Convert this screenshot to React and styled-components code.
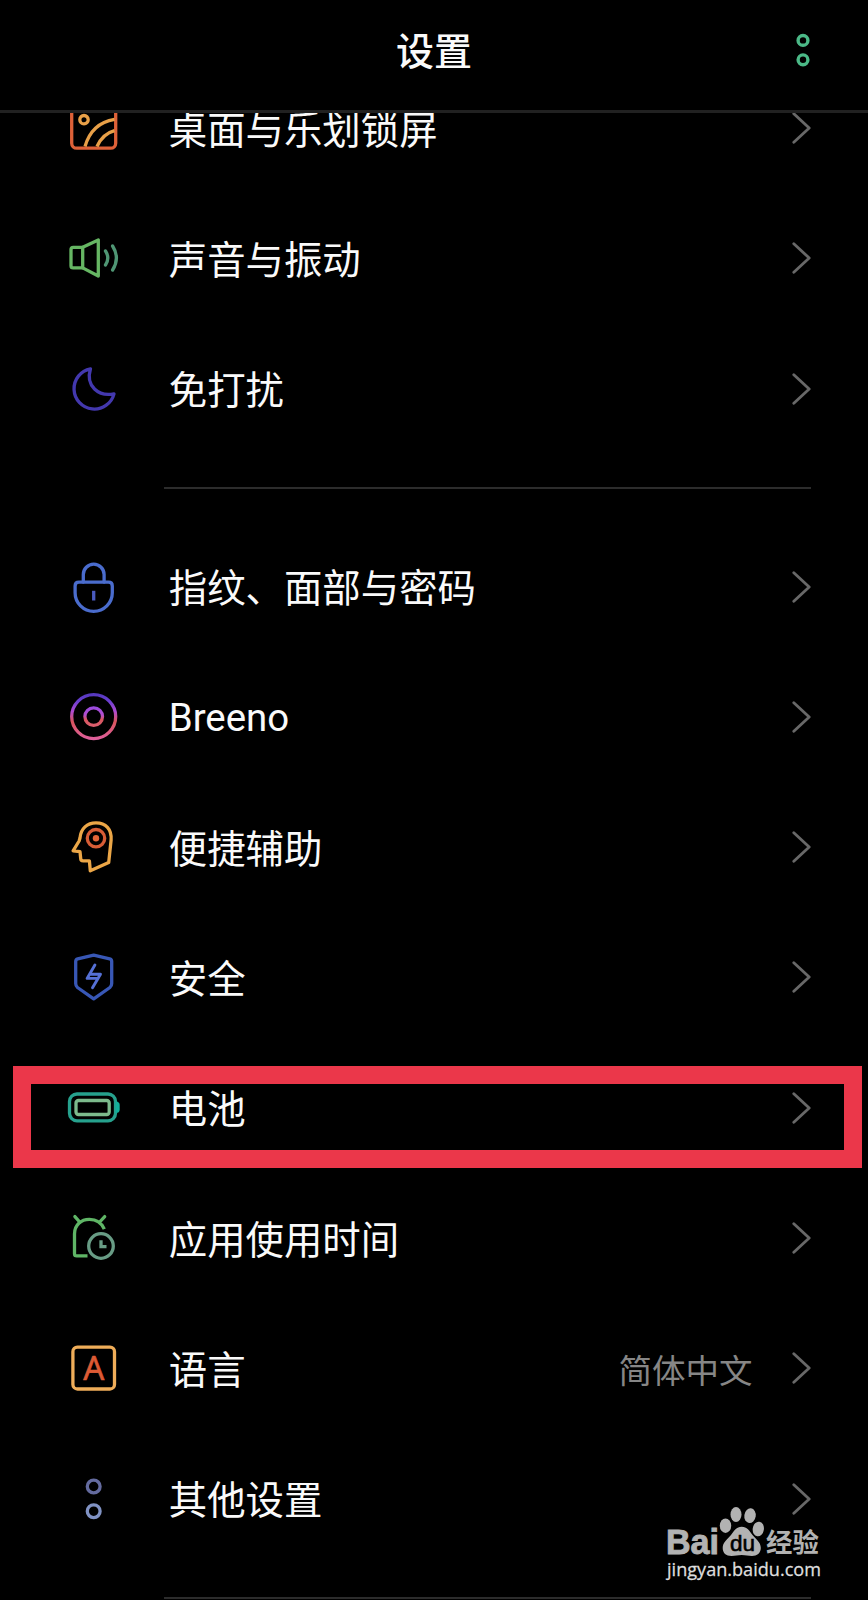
import React from "react";
import styled, { createGlobalStyle } from "styled-components";

const GlobalStyle = createGlobalStyle`
  * { box-sizing: border-box; }
  body {
    margin: 0;
    background: #000;
    color: #fafafa;
    font-family: "Noto Sans CJK SC", sans-serif;
  }
`;

const Screen = styled.main`
  display: flex;
  flex-direction: column;
  position: relative;
  width: 868px;
  height: 1600px;
  overflow: hidden;
  background: #000;
`;

const Header = styled.header`
  display: grid;
  grid-template-columns: 1fr auto 1fr;
  align-items: center;
  flex: none;
  height: 113px;
  padding: 0 55px 11px;
  border-bottom: 3px solid #212121;
`;

const Title = styled.h1`
  grid-column: 2;
  margin: 0;
  padding-bottom: 1px;
  font-size: 38px;
  line-height: 56px;
  font-weight: 500;
`;

const MenuButton = styled.button`
  justify-self: end;
  display: flex;
  padding: 0;
  border: 0;
  background: none;
`;

const Viewport = styled.div`
  flex: 1;
  min-height: 0;
  overflow: hidden;
`;

const List = styled.div`
  display: flex;
  flex-direction: column;
  margin-top: -50.2px;
`;

const Row = styled.div`
  position: relative;
  display: flex;
  align-items: center;
  flex: none;
  height: 130.3px;
  padding: 0 56px 0 64px;
`;

const IconBox = styled.svg`
  flex: none;
  width: 60px;
  height: 60px;
  margin-right: 44.8px;
  fill: none;
  stroke-width: 3.3;
  stroke-linecap: round;
  stroke-linejoin: round;
`;

const Label = styled.span`
  flex: 1;
  font-family: ${(p) => (p.$latin ? "Roboto, sans-serif" : "inherit")};
  font-size: 38.4px;
  line-height: 56px;
  padding-top: ${(p) => (p.$latin ? "3px" : "0")};
  padding-bottom: ${(p) => (p.$latin ? "0" : "2.6px")};
`;

const Value = styled.span`
  margin-right: 39.5px;
  padding-top: 0.6px;
  color: #868686;
  font-size: 33.5px;
  line-height: 50px;
`;

const Chevron = styled.svg`
  flex: none;
  width: 20px;
  height: 34px;
  fill: none;
  stroke: #686868;
  stroke-width: 2.8;
  stroke-linecap: round;
  stroke-linejoin: round;
`;

const Divider = styled.div`
  display: flex;
  align-items: center;
  flex: none;
  height: 67.7px;
  padding: 0 57px 0 164px;

  &::after {
    content: "";
    flex: 1;
    height: 2px;
    background: #2c2c2c;
  }
`;

const Highlight = styled.div`
  position: absolute;
  top: 23px;
  left: 12.7px;
  width: 849.6px;
  height: 102px;
  border: 18.5px solid #eb374a;
`;

const Watermark = styled.svg`
  position: absolute;
  left: 660px;
  top: 1500px;
  width: 180px;
  height: 90px;
`;

const icons = {
  wallpaper: (
    <>
      <rect x="-22" y="-20.2" width="44" height="40.4" rx="5" stroke="#de6138" />
      <g stroke="#e8a048" strokeLinecap="butt">
        <circle cx="-9.7" cy="-8.3" r="4.2" />
        <path d="M-8.7 18.5C-4.5 4 5 -6 20.8 -8.6" />
        <path d="M3.3 18.5C7 10.5 12 5 20.8 2.7" />
      </g>
    </>
  ),
  sound: (
    <>
      <g stroke="#66b663">
        <path d="M-11 -10.7H-20.5Q-22.7 -10.7 -22.7 -8.5V7.7Q-22.7 9.9 -20.5 9.9H-11Z" />
        <path d="M-11 -10.7L4.6 -18V18L-11 9.9" />
      </g>
      <g stroke="#4f9674">
        <path d="M11.8 -7Q16.4 0 11.8 7" />
        <path d="M18.9 -12Q26.5 0 18.9 12" />
      </g>
    </>
  ),
  moon: (
    <path
      stroke="#4338ae"
      d="M-3.2 -20.2A20.3 20.3 0 1 0 20.3 4.8C5 8 -8.5 -3 -3.2 -20.2Z"
    />
  ),
  lock: (
    <g stroke="#4a6ccd">
      <path d="M-14.8 -4.8H14.8Q18.6 -4.8 18.6 -1V5.7A18.6 18.6 0 0 1 -18.6 5.7V-1Q-18.6 -4.8 -14.8 -4.8Z" />
      <path d="M-10.4 -5V-12.4A10.4 10.4 0 0 1 10.4 -12.4V-5" />
      <path d="M0 3.8V13.5" stroke="#4a5bc0" strokeLinecap="butt" />
    </g>
  ),
  breeno: (
    <>
      <defs>
        <linearGradient id="ring" gradientUnits="userSpaceOnUse" x1="0" y1="-23" x2="0" y2="23">
          <stop offset="0" stopColor="#5538bd" />
          <stop offset="0.15" stopColor="#693ed0" />
          <stop offset="0.38" stopColor="#b04bd0" />
          <stop offset="0.6" stopColor="#d9545c" />
          <stop offset="1" stopColor="#df609f" />
        </linearGradient>
        <linearGradient id="core" gradientUnits="userSpaceOnUse" x1="0" y1="-10" x2="0" y2="10">
          <stop offset="0" stopColor="#9a4be0" />
          <stop offset="0.4" stopColor="#b34fcc" />
          <stop offset="0.62" stopColor="#d9565f" />
          <stop offset="1" stopColor="#dd6070" />
        </linearGradient>
      </defs>
      <circle cy="-0.4" r="22" stroke="url(#ring)" />
      <circle cy="-0.4" r="8.8" stroke="url(#core)" />
    </>
  ),
  assist: (
    <>
      <path
        stroke="#eba647"
        d="M-13.7 -9C-13 -18.5 -6.5 -24.2 2.3 -24.2C12 -24.2 18.2 -18 17.4 -7L15 15.6L-3.4 23.8L-4.3 13.9H-10.5Q-13 13.9 -13 11.5L-13.7 4.7L-20.6 3.8L-14.6 -6Z"
      />
      <circle cx="2.3" cy="-8.8" r="8.7" stroke="#d85d36" />
      <circle cx="2.3" cy="-8.8" r="3.2" fill="#e46437" />
    </>
  ),
  shield: (
    <>
      <path
        stroke="#3857b5"
        d="M0 -21.8L-16 -18.2Q-18 -17.7 -18 -15.5V6.5Q-18 9 -16.2 10.5L0 21.8L16.2 10.5Q18 9 18 6.5V-15.5Q18 -17.7 16 -18.2Z"
      />
      <g stroke="#5570d5" strokeWidth="2.9">
        <path d="M1.2 -12L-6.6 1.4H3" />
        <path d="M-1.2 10.8L6.8 -2.8H-3" />
      </g>
    </>
  ),
  battery: (
    <>
      <rect x="-24.2" y="-14" width="46" height="26.8" rx="7.5" stroke="#26a18d" />
      <rect x="-17.7" y="-7.5" width="33.2" height="14" rx="2.5" stroke="#7cba8c" />
      <path d="M22 -6.7Q26 -6.3 26 -3V1.6Q26 5 22 5.3Z" fill="#12b09b" />
    </>
  ),
  usage: (
    <>
      <g stroke="#5fb566" strokeLinecap="butt">
        <path d="M-6.2 17.9H-17Q-19.2 17.9 -19.2 15.7V-4C-19.2 -13 -12.5 -18.6 -4.4 -18.6C3 -18.6 8.2 -14.5 10.6 -8.8" />
        <path d="M-18.8 -21.4L-14 -16M11 -21.4L6 -16" strokeLinecap="round" />
      </g>
      <g stroke="#689c85">
        <circle cx="7.3" cy="8" r="12.3" />
        <path d="M7.3 2.2V8.7H12.8" strokeLinecap="butt" strokeLinejoin="miter" />
      </g>
    </>
  ),
  language: (
    <>
      <rect x="-20.8" y="-20.8" width="41.6" height="41.8" rx="4.5" stroke="#efad59" />
      <text
        y="12"
        textAnchor="middle"
        fontFamily="Noto Sans"
        fontSize="33"
        fill="#dd5a34"
        stroke="#dd5a34"
        strokeWidth="0.6"
      >
        A
      </text>
    </>
  ),
  more: (
    <>
      <circle cy="-12.5" r="6.4" stroke="#646b9f" />
      <circle cy="12.2" r="6.4" stroke="#8092c3" />
    </>
  ),
};

function SettingRow({ icon, label, value, latin, highlighted }) {
  return (
    <Row>
      <IconBox viewBox="-29.7 -30 60 60">{icons[icon]}</IconBox>
      <Label $latin={latin}>{label}</Label>
      {value && <Value>{value}</Value>}
      <Chevron viewBox="0 -17 20 34">
        <path d="M1.8 -14.3L17.2 0L1.8 14.3" />
      </Chevron>
      {highlighted && <Highlight />}
    </Row>
  );
}

const groups = [
  [
    { icon: "wallpaper", label: "桌面与乐划锁屏" },
    { icon: "sound", label: "声音与振动" },
    { icon: "moon", label: "免打扰" },
  ],
  [
    { icon: "lock", label: "指纹、面部与密码" },
    { icon: "breeno", label: "Breeno", latin: true },
    { icon: "assist", label: "便捷辅助" },
    { icon: "shield", label: "安全" },
    { icon: "battery", label: "电池", highlighted: true },
    { icon: "usage", label: "应用使用时间" },
    { icon: "language", label: "语言", value: "简体中文" },
    { icon: "more", label: "其他设置" },
  ],
];

export default function App() {
  return (
    <>
      <GlobalStyle />
      <Screen>
        <Header>
          <Title>设置</Title>
          <MenuButton aria-label="更多">
            <svg width="20" height="40" fill="none" stroke="#4bb987" strokeWidth="3.4">
              <circle cx="10" cy="10.4" r="4.9" />
              <circle cx="10" cy="29.8" r="4.9" />
            </svg>
          </MenuButton>
        </Header>
        <Viewport>
          <List>
            {groups.map((rows, index) => (
              <React.Fragment key={index}>
                {rows.map((row) => (
                  <SettingRow key={row.icon} {...row} />
                ))}
                <Divider />
              </React.Fragment>
            ))}
          </List>
        </Viewport>
        <Watermark viewBox="0 0 180 90" fill="#b2b2b2">
          <text x="6" y="54.3" fontFamily="Liberation Sans" fontWeight="700" fontSize="34.5" textLength="53" lengthAdjust="spacingAndGlyphs" stroke="#b2b2b2" strokeWidth="0.9">Bai</text>
          <ellipse cx="65.5" cy="25.7" rx="5.7" ry="7.3" />
          <ellipse cx="76" cy="14.5" rx="5.5" ry="7.6" />
          <ellipse cx="90" cy="15.7" rx="5.7" ry="7.4" transform="rotate(8 90 15.7)" />
          <ellipse cx="98.3" cy="29" rx="5.6" ry="7.4" transform="rotate(8 98.3 29)" />
          <path d="M81.7 26.8C87 26.8 89.5 31 92.5 35C96 39.5 100.8 42 100.8 48C100.8 53 97 56 92 56C88 56 86 55 81.7 55C77.5 55 75.5 56 71.5 56C66 56 62.7 53 62.7 48C62.7 42 67.5 39.5 71 35C74 31 76.5 26.8 81.7 26.8Z" />
          <text x="70" y="51" fontFamily="Liberation Sans" fontSize="22.5" textLength="25" lengthAdjust="spacingAndGlyphs" fill="#000" stroke="#000" strokeWidth="0.6">du</text>
          <text x="106" y="52.2" fontFamily="Noto Sans CJK SC" fontWeight="700" fontSize="26.4">经验</text>
          <text x="7" y="75.6" fontFamily="Open Sans" fontSize="18.8" textLength="154" lengthAdjust="spacingAndGlyphs" fill="#dedede" stroke="#dedede" strokeWidth="0.3">jingyan.baidu.com</text>
        </Watermark>
      </Screen>
    </>
  );
}
